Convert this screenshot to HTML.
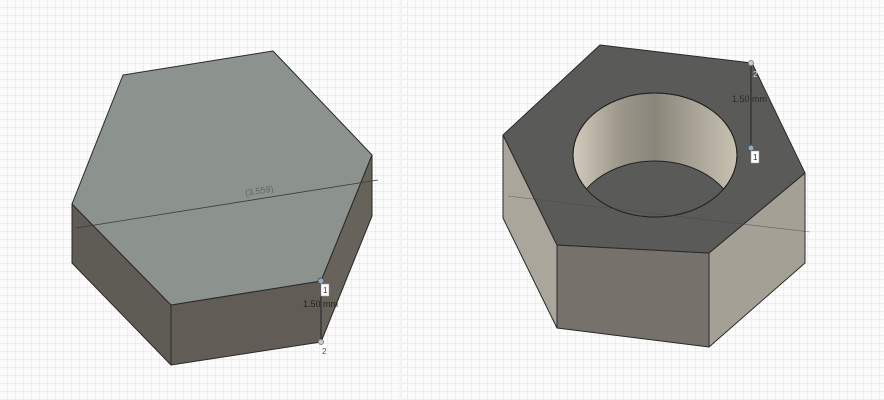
<!DOCTYPE html>
<html><head><style>
html,body{margin:0;padding:0;background:#fff;}
body{width:884px;height:400px;overflow:hidden;position:relative;}
</style></head><body>
<svg width="884" height="400" viewBox="0 0 884 400" xmlns="http://www.w3.org/2000/svg" style="position:absolute;left:0;top:0">
<defs>
<pattern id="g" width="8" height="8" patternUnits="userSpaceOnUse">
<path d="M8 0V8M0 8H8" stroke="#e2e2e2" stroke-width="1" fill="none"/>
</pattern>
<linearGradient id="wall" x1="0" x2="1" y1="0" y2="0">
<stop offset="0" stop-color="#d2cbbd"/>
<stop offset="0.3" stop-color="#9a9588"/>
<stop offset="0.5" stop-color="#8a867b"/>
<stop offset="0.75" stop-color="#a9a496"/>
<stop offset="1" stop-color="#c9c2b3"/>
</linearGradient>
<clipPath id="hole"><ellipse cx="655" cy="155" rx="82" ry="62"/></clipPath>
</defs>
<rect width="884" height="400" fill="#fbfbfb"/>
<rect width="884" height="400" fill="url(#g)"/>
<rect x="399" y="0" width="3" height="400" fill="#f4f4f4"/>

<!-- Left hex -->
<g stroke="#2a2a2a" stroke-width="1" stroke-linejoin="round">
<polygon points="72,204 171,305 171,365 72,263" fill="#5f5c55"/>
<polygon points="171,305 321,281 321,342 171,365" fill="#615d56"/>
<polygon points="372,155 321,281 321,342 372,216" fill="#67635b"/>
<polygon points="123,75 273,51 372,155 321,281 171,305 72,204" fill="#8c928e"/>
</g>
<line x1="76" y1="228" x2="378" y2="180" stroke="#3a3a3a" stroke-width="0.8"/>
<text x="245" y="194" font-family="Liberation Sans,sans-serif" font-size="9" fill="#666" transform="rotate(-9 258 191)">(3.559)</text>
<line x1="321" y1="281" x2="321" y2="342" stroke="#222" stroke-width="1"/>
<circle cx="321" cy="281" r="3" fill="#9ab" stroke="#456" stroke-width="1"/>
<rect x="321" y="284" width="8" height="12" fill="#fff" stroke="#999" stroke-width="0.5"/>
<text x="323" y="293" font-family="Liberation Sans,sans-serif" font-size="8" fill="#333">1</text>
<text x="303" y="307" font-family="Liberation Sans,sans-serif" font-size="9" fill="#222">1.50 mm</text>
<circle cx="321" cy="342" r="2.5" fill="#ccc" stroke="#888" stroke-width="1"/>
<text x="322" y="354" font-family="Liberation Sans,sans-serif" font-size="8" fill="#555">2</text>

<!-- Right hex -->
<g stroke="#2a2a2a" stroke-width="1" stroke-linejoin="round">
<polygon points="503,135 557,245 557,328 503,218" fill="#aba69b"/>
<polygon points="557,245 709,253 709,347 557,328" fill="#76726b"/>
<polygon points="709,253 805,173 805,263 709,347" fill="#a5a096"/>
<polygon points="600,45 752,63 805,173 709,253 557,245 503,135" fill="#5a5b58"/>
</g>
<ellipse cx="655" cy="155" rx="82" ry="62" fill="url(#wall)" stroke="#222" stroke-width="1"/>
<g clip-path="url(#hole)">
<ellipse cx="655" cy="223" rx="82" ry="62" fill="#5a5b58" stroke="#222" stroke-width="1"/>
</g>
<ellipse cx="655" cy="155" rx="82" ry="62" fill="none" stroke="#222" stroke-width="1"/>
<line x1="508" y1="196" x2="810" y2="232" stroke="#444" stroke-width="0.6" opacity="0.7"/>
<line x1="751" y1="63" x2="751" y2="148" stroke="#222" stroke-width="1"/>
<circle cx="751" cy="63" r="2.5" fill="#ccc" stroke="#888" stroke-width="1"/>
<text x="753" y="77" font-family="Liberation Sans,sans-serif" font-size="8" fill="#ddd">2</text>
<text x="732" y="102" font-family="Liberation Sans,sans-serif" font-size="9" fill="#2a2a2a">1.50 mm</text>
<circle cx="751" cy="148" r="3" fill="#9ab" stroke="#456" stroke-width="1"/>
<rect x="751" y="151" width="8" height="12" fill="#fff" stroke="#999" stroke-width="0.5"/>
<text x="753" y="160" font-family="Liberation Sans,sans-serif" font-size="8" fill="#333">1</text>
</svg>
</body></html>
